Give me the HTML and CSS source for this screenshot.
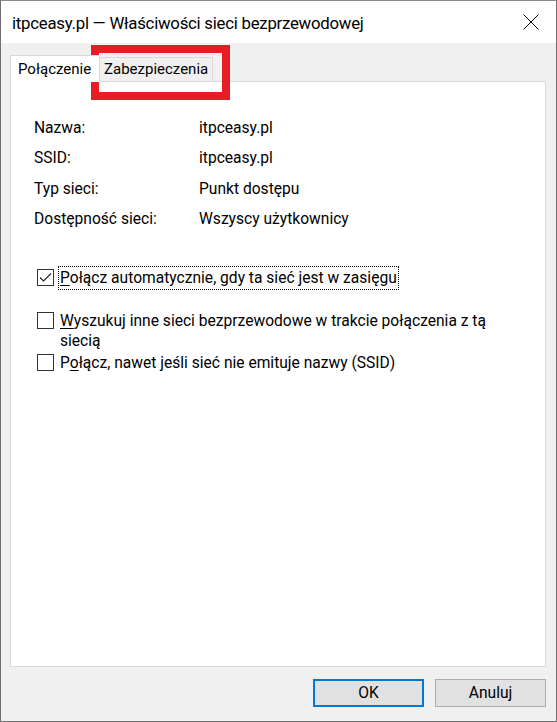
FILE: index.html
```html
<!DOCTYPE html>
<html lang="pl">
<head>
<meta charset="utf-8">
<title>Właściwości sieci bezprzewodowej</title>
<link rel="stylesheet" href="styles.css">
</head>
<body>
<div class="window">
  <div class="titlebar">
    <span class="title">itpceasy.pl — Właściwości sieci bezprzewodowej</span>
    <svg class="close" width="16" height="16" viewBox="0 0 16 16"><path d="M0.5 0.5 L15.5 15.5 M15.5 0.5 L0.5 15.5" stroke="#000" stroke-width="1" fill="none"/></svg>
  </div>
  <div class="client">
    <div class="tabs">
      <div class="tab active">Połączenie</div>
      <div class="tab">Zabezpieczenia</div>
    </div>
    <div class="panel">
      <div class="props">
        <span>Nazwa:</span><span>itpceasy.pl</span>
        <span>SSID:</span><span>itpceasy.pl</span>
        <span>Typ sieci:</span><span>Punkt dostępu</span>
        <span>Dostępność sieci:</span><span>Wszyscy użytkownicy</span>
      </div>
      <div class="check first">
        <span class="box"><svg width="15" height="15" viewBox="0 0 15 15"><path d="M2 7.5 L5.5 11 L13 3.5" stroke="#222" stroke-width="1.1" fill="none"/></svg></span>
        <span class="label focus"><u>P</u>ołącz automatycznie, gdy ta sieć jest w zasięgu</span>
      </div>
      <div class="check second">
        <span class="box"></span>
        <span class="label"><u>W</u>yszukuj inne sieci bezprzewodowe w trakcie połączenia z tą siecią</span>
      </div>
      <div class="check third">
        <span class="box"></span>
        <span class="label">P<u>o</u>łącz, nawet jeśli sieć nie emituje nazwy (SSID)</span>
      </div>
    </div>
    <div class="buttons">
      <button class="btn default">OK</button>
      <button class="btn">Anuluj</button>
    </div>
  </div>
  <div class="highlight"></div>
</div>
</body>
</html>
```

FILE: styles.css
```css
* { box-sizing: border-box; }
html, body { margin: 0; padding: 0; }
body {
  width: 557px;
  height: 722px;
  font-family: Roboto, "Noto Sans", sans-serif;
  color: #000;
  background: #f0f0f0;
}
.window {
  position: relative;
  width: 557px;
  height: 722px;
  border: 1px solid #707070;
  border-top-color: #8a8a8a;
  background: #f0f0f0;
  display: flex;
  flex-direction: column;
}
.titlebar {
  height: 42px;
  background: #fff;
  display: flex;
  align-items: center;
  justify-content: space-between;
  padding: 1px 17px 0 11px;
  flex: none;
}
.title {
  font-size: 16.8px;
  letter-spacing: -0.25px;
  color: #000;
}
.close { display: block; margin-top: -1px; }
.client {
  flex: 1;
  padding: 12px 10px 0 9px;
  display: flex;
  flex-direction: column;
}
.tabs {
  display: flex;
  height: 27px;
  position: relative;
  z-index: 1;
  font-size: 15px;
}
.tab {
  border: 1px solid #d9d9d9;
  border-bottom: none;
  background: #f0f0f0;
  margin-top: 2px;
  height: 24px;
  padding: 0 4px 0 4px;
  line-height: 22px;
}
.tab.active {
  background: #fff;
  margin-top: 0;
  height: 27px;
  width: 89px;
  padding: 0 0 0 7px;
  line-height: 26px;
  border-right: none;
}
.panel {
  margin-top: -1px;
  height: 586px;
  background: #fff;
  border: 1px solid #d9d9d9;
  padding: 36px 0 0 23px;
  font-size: 15.6px;
}
.props {
  display: grid;
  grid-template-columns: 165px auto;
  row-gap: 10.3px;
  line-height: 20px;
}
.check {
  display: flex;
  align-items: flex-start;
  line-height: 20px;
}
.check.first { margin-top: 39px; }
.check.second { margin-top: 23px; }
.check.third { margin-top: 2px; }
.box {
  flex: none;
  width: 17px;
  height: 17px;
  margin: 1px 6px 0 3px;
  border: 1px solid #333;
  background: #fff;
  display: flex;
  align-items: center;
  justify-content: center;
}
.box svg { display: block; }
.label { width: 450px; }
.label.focus {
  width: auto;
  outline: 1px dotted #000;
  outline-offset: 1px;
}
.label u { text-underline-offset: 2px; }
.buttons {
  display: flex;
  justify-content: flex-end;
  gap: 11px;
  margin-top: 12px;
}
.btn {
  width: 111px;
  height: 28px;
  background: #e1e1e1;
  border: 1px solid #adadad;
  font-family: Roboto, "Noto Sans", sans-serif;
  font-size: 15.6px;
  color: #000;
  padding: 0;
}
.btn.default { border: 2px solid #0078d7; }
.highlight {
  position: absolute;
  left: 90px;
  top: 44px;
  width: 139px;
  height: 55px;
  border: 8px solid #e81c24;
}
```
